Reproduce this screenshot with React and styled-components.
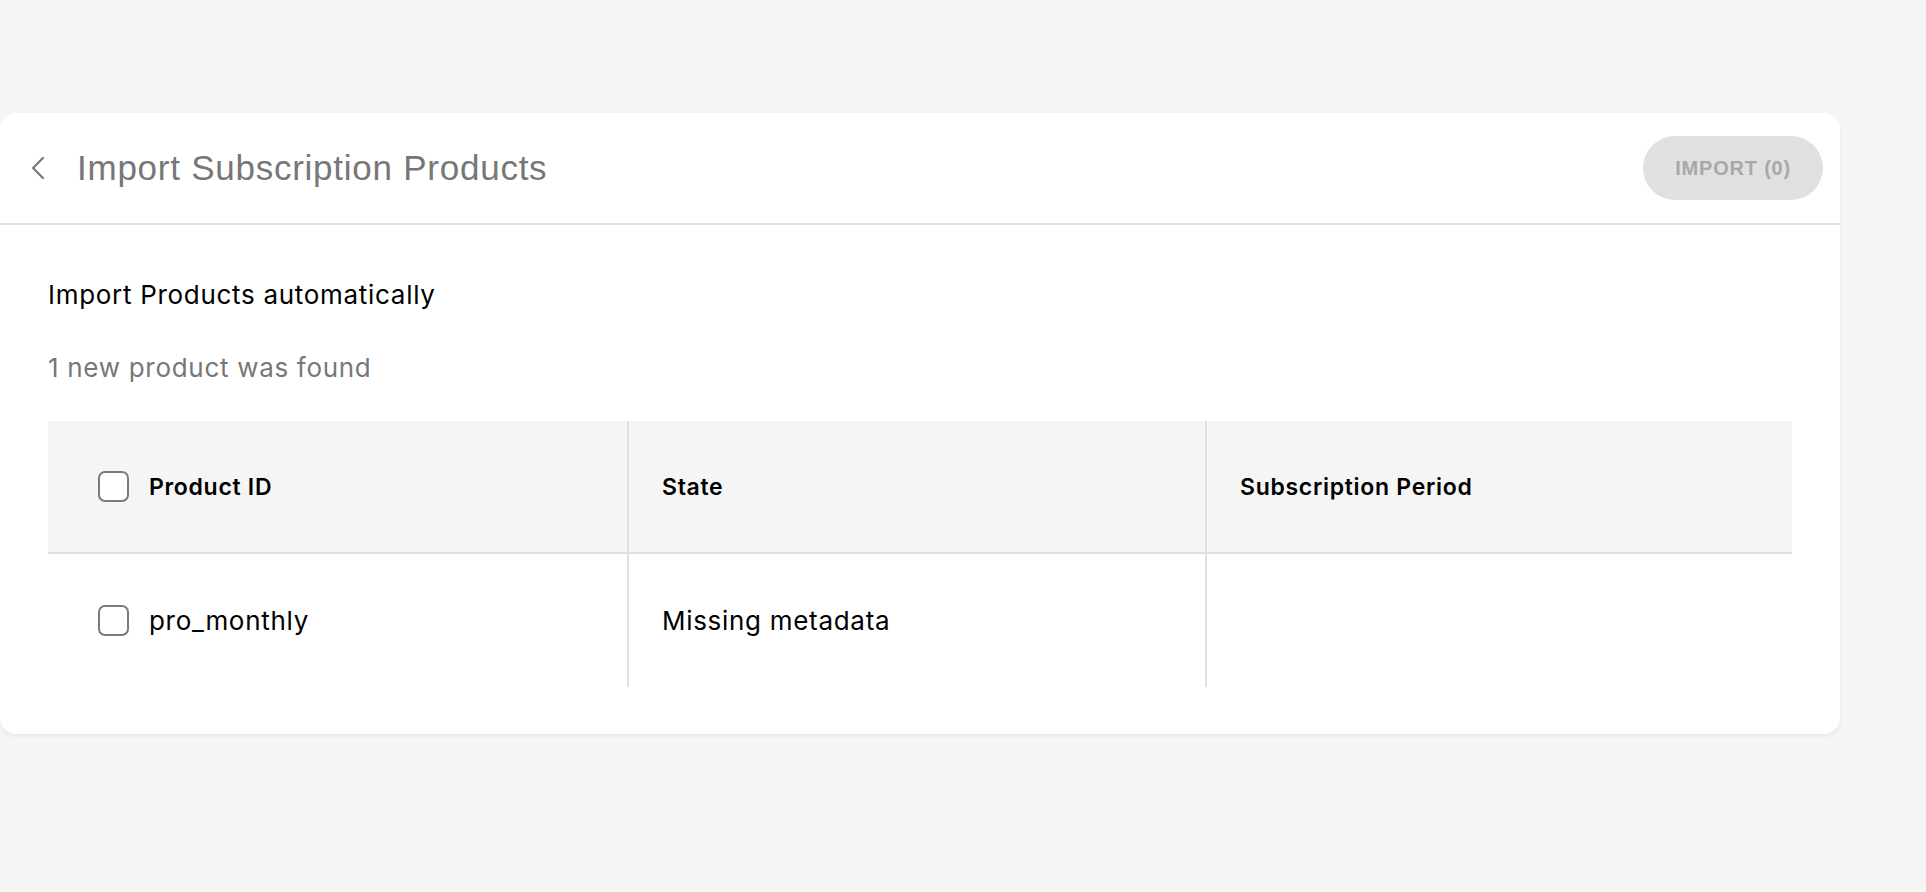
import React, { useState } from 'react';
import styled, { createGlobalStyle } from 'styled-components';

const GlobalStyle = createGlobalStyle`
  body {
    margin: 0;
    background: #f5f5f5;
    font-family: Inter, "Noto Sans", sans-serif;
    color: #000;
  }
`;

const Page = styled.div`
  padding: 113px 0 80px 0;
`;

const Card = styled.div`
  width: 1840px;
  background: #fff;
  border-radius: 16px;
  box-shadow: 0 2px 4px rgba(0, 0, 0, 0.06);
`;

const Header = styled.div`
  height: 110px;
  display: flex;
  align-items: center;
  padding: 0 17px 0 31px;
  border-bottom: 2px solid #e0e0e0;
`;

const BackButton = styled.button`
  border: 0;
  background: none;
  padding: 0;
  margin-right: 32px;
  display: flex;
  align-items: center;
  cursor: pointer;
`;

const Title = styled.h1`
  flex: 1;
  margin: 0;
  font-family: "Liberation Sans", Arial, sans-serif;
  font-size: 35px;
  font-weight: 400;
  letter-spacing: 0.75px;
  color: #777;
`;

const ImportButton = styled.button`
  height: 64px;
  padding: 0 32px;
  border: 0;
  border-radius: 32px;
  background: #e0e0e0;
  color: #a8a8a8;
  font-family: "Liberation Sans", Arial, sans-serif;
  font-weight: 700;
  font-size: 20px;
  letter-spacing: 0.8px;
  cursor: default;
`;

const Body = styled.div`
  padding: 54px 48px 47px 48px;
`;

const Lead = styled.div`
  font-size: 26px;
  line-height: 32px;
  letter-spacing: 0.7px;
  color: ${p => (p.$muted ? '#777' : '#000')};
  margin-bottom: ${p => p.$gap || 0}px;
`;

const Table = styled.div`
  display: grid;
  grid-template-columns: 581px 578px 1fr;
`;

const Cell = styled.div`
  display: flex;
  align-items: center;
  gap: 20px;
  height: ${p => (p.$head ? 131 : 133)}px;
  padding-left: ${p => (p.$first ? 50 : 33)}px;
  background: ${p => (p.$head ? '#f5f5f5' : '#fff')};
  border-bottom: ${p => (p.$head ? '2px solid #e0e0e0' : '0')};
  border-right: ${p => (p.$last ? '0' : '2px solid #e0e0e0')};
  font-size: ${p => (p.$head ? 23 : 26)}px;
  font-weight: ${p => (p.$head ? 600 : 400)};
  letter-spacing: 0.7px;
`;

const Box = styled.span`
  width: 31px;
  height: 31px;
  box-sizing: border-box;
  border: 2px solid #7a7a7a;
  border-radius: 7px;
  background: #fff;
  flex-shrink: 0;
  cursor: pointer;
`;

const Chevron = () => (
  <svg width="14" height="24" viewBox="0 0 14 24" fill="none">
    <path d="M12 2 L2 12 L12 22" stroke="#777" strokeWidth="2.2" strokeLinecap="round" strokeLinejoin="round" />
  </svg>
);

const products = [{ id: 'pro_monthly', state: 'Missing metadata', period: '' }];

export default function App() {
  const [selected] = useState([]);
  return (
    <Page>
      <GlobalStyle />
      <Card>
        <Header>
          <BackButton aria-label="Back">
            <Chevron />
          </BackButton>
          <Title>Import Subscription Products</Title>
          <ImportButton disabled>IMPORT ({selected.length})</ImportButton>
        </Header>
        <Body>
          <Lead $gap={41}>Import Products automatically</Lead>
          <Lead $muted $gap={37}>1 new product was found</Lead>
          <Table>
            <Cell $head $first>
              <Box />
              Product ID
            </Cell>
            <Cell $head>State</Cell>
            <Cell $head $last>Subscription Period</Cell>
            {products.map(p => (
              <React.Fragment key={p.id}>
                <Cell $first>
                  <Box />
                  {p.id}
                </Cell>
                <Cell>{p.state}</Cell>
                <Cell $last>{p.period}</Cell>
              </React.Fragment>
            ))}
          </Table>
        </Body>
      </Card>
    </Page>
  );
}
